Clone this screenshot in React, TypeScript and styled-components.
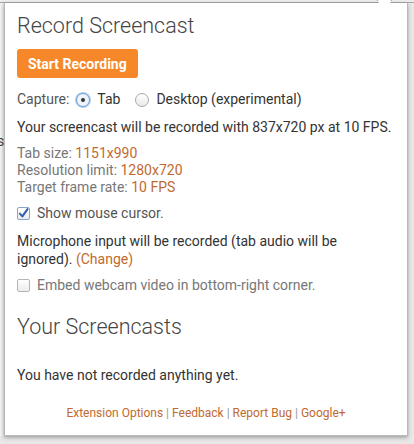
import React, { useState } from 'react';
import styled, { createGlobalStyle } from 'styled-components';

type Capture = 'tab' | 'desktop';

const GlobalStyle = createGlobalStyle`
  html, body {
    margin: 0;
    padding: 0;
    background: #e6e6e6;
    font-family: Roboto, 'Noto Sans', Arial, sans-serif;
  }
`;

/**
 * Screencast popup, as it shows under the toolbar button
 */
function App() {
  const [capture, setCapture] = useState<Capture>('tab');
  const [showCursor, setShowCursor] = useState(true);
  const [webcam, setWebcam] = useState(false);

  return (
    <Screen>
      <GlobalStyle />
      <TopStrip />
      <Body>
        <Behind>s</Behind>
        <Popup>
          <Notch />
          <H1>Record Screencast</H1>
          <StartButton>Start Recording</StartButton>

          <CaptureRow>
            <span>Capture:</span>
            <Choice onClick={() => setCapture('tab')}>
              <Radio $on={capture === 'tab'} />
              Tab
            </Choice>
            <Choice onClick={() => setCapture('desktop')}>
              <Radio $on={capture === 'desktop'} />
              Desktop (experimental)
            </Choice>
          </CaptureRow>

          <Para>Your screencast will be recorded with 837x720 px at 10 FPS.</Para>

          <Stats>
            <div>
              Tab size: <Value>1151x990</Value>
            </div>
            <div>
              Resolution limit: <Value>1280x720</Value>
            </div>
            <div>
              Target frame rate: <Value>10 FPS</Value>
            </div>
          </Stats>

          <CheckRow onClick={() => setShowCursor(!showCursor)}>
            <Box $on={showCursor}>
              {showCursor && (
                <svg width='13' height='13' viewBox='0 0 12 12'>
                  <path d='M2 6.2 L4.8 9.2 L10.4 1.2' fill='none' stroke='#2f5fae' strokeWidth='2.2' strokeLinecap='round' strokeLinejoin='round' />
                </svg>
              )}
            </Box>
            Show mouse cursor.
          </CheckRow>

          <Para>
            Microphone input will be recorded (tab audio will be ignored). <Link href='#'>(Change)</Link>
          </Para>

          <CheckRow $muted onClick={() => setWebcam(!webcam)}>
            <Box $on={webcam} />
            Embed webcam video in bottom-right corner.
          </CheckRow>

          <H2>Your Screencasts</H2>

          <Empty>You have not recorded anything yet.</Empty>

          <Footer>
            <Link href='#'>Extension Options</Link> | <Link href='#'>Feedback</Link> |{' '}
            <Link href='#'>Report Bug</Link> | <Link href='#'>Google+</Link>
          </Footer>
        </Popup>
      </Body>
    </Screen>
  );
}

export default App;

const Screen = styled.div`
  width: 414px;
  height: 444px;
  overflow: hidden;
  background: #e8e8e8;
`;

const TopStrip = styled.div`
  height: 2px;
  background: #ededed;
  border-bottom: 1px solid #a9a9a9;
`;

const Body = styled.div`
  display: flex;
  align-items: flex-start;
  position: relative;
  background: linear-gradient(#f4f4f4, #f4f4f4) no-repeat 0 0 / 4px 100%;
`;

const Behind = styled.span`
  position: absolute;
  left: -3px;
  top: 130px;
  font-size: 14px;
  color: #444;
`;

const Popup = styled.div`
  position: relative;
  margin-left: 4px;
  width: 404px;
  height: 433px;
  box-sizing: border-box;
  background: #fff;
  border: 1px solid #b9b9b9;
  border-top: none;
  box-shadow: 0 2px 4px rgba(0, 0, 0, 0.25), -1px 0 3px rgba(0, 0, 0, 0.12);
  padding: 10px 12px 0 12px;
  color: #333;
  font-size: 14px;
  line-height: 17px;
`;

const Notch = styled.div`
  position: absolute;
  top: -8px;
  left: 374px;
  width: 10px;
  height: 10px;
  background: #fff;
  border-left: 1px solid #a9a9a9;
  border-top: 1px solid #a9a9a9;
  transform: rotate(45deg);
`;

const H1 = styled.h1`
  margin: 0 0 10px 0;
  font-size: 21.5px;
  line-height: 26px;
  font-weight: 300;
  color: #444;
`;

const H2 = styled(H1)`
  margin: 20px 0 0 0;
`;

const StartButton = styled.button`
  display: block;
  height: 29px;
  padding: 0 11px;
  border: none;
  border-radius: 3px;
  background: #f7882a;
  color: #fff;
  font-family: inherit;
  font-size: 14px;
  font-weight: 700;
  cursor: pointer;
`;

const CaptureRow = styled.div`
  display: flex;
  align-items: center;
  gap: 7px;
  margin-top: 13px;
  color: #555;
`;

const Choice = styled.label`
  display: flex;
  align-items: center;
  gap: 7px;
  margin-right: 8px;
  color: #333;
  cursor: pointer;
`;

const Radio = styled.span<{ $on: boolean }>`
  display: inline-flex;
  align-items: center;
  justify-content: center;
  width: 14px;
  height: 14px;
  box-sizing: border-box;
  border-radius: 50%;
  border: 1px solid ${p => (p.$on ? '#6f9bd6' : '#aaa')};
  background: ${p => (p.$on ? '#eef4fc' : 'linear-gradient(#fff, #e9e9e9)')};
  box-shadow: ${p => (p.$on ? '0 0 0 1px #b7d0f0' : 'none')};

  &::after {
    content: '';
    display: ${p => (p.$on ? 'block' : 'none')};
    width: 4px;
    height: 4px;
    border-radius: 50%;
    background: #333;
  }
`;

const Para = styled.p`
  margin: 10px 0 0 0;
  line-height: 18px;
`;

const Stats = styled.div`
  margin-top: 9px;
  color: #777;
`;

const Value = styled.span`
  color: #c26a2e;
`;

const CheckRow = styled.label<{ $muted?: boolean }>`
  display: flex;
  align-items: center;
  gap: 7px;
  margin-top: 9px;
  color: ${p => (p.$muted ? '#777' : '#555')};
  cursor: pointer;
`;

const Box = styled.span<{ $on: boolean }>`
  display: inline-flex;
  align-items: center;
  justify-content: center;
  width: 13px;
  height: 13px;
  box-sizing: border-box;
  border-radius: 2px;
  border: 1px solid ${p => (p.$on ? '#8aa6cf' : '#b5b5b5')};
  background: linear-gradient(#fff, #ececec);
`;

const Link = styled.a`
  color: #c26a2e;
  text-decoration: none;
`;

const Empty = styled.p`
  margin: 27px 0 0 0;
`;

const Footer = styled.div`
  margin-top: 21px;
  text-align: center;
  font-size: 12px;
  color: #999;
`;
